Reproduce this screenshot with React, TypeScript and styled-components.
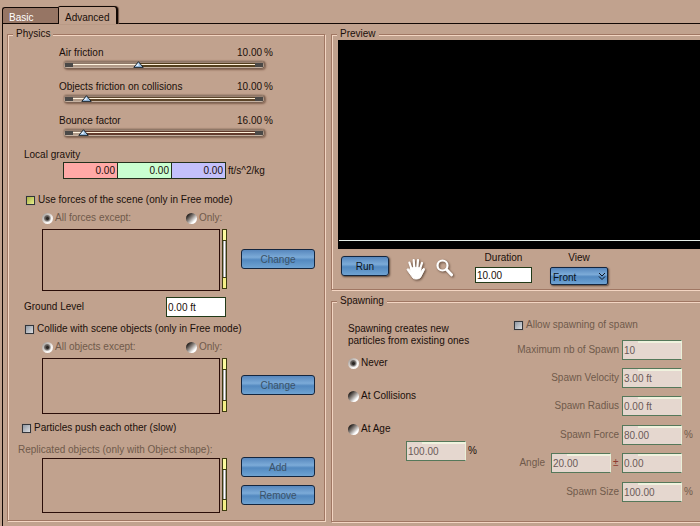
import React, { useState } from "react";
import styled, { createGlobalStyle } from "styled-components";

const bg = "#c1a28e";
const ink = "#1a0f0a";
const dim = "#705a4b";
const edgeDark = "#a07763";
const edgeLight = "#f3d5c2";

const Global = createGlobalStyle`
  * { box-sizing: border-box; }
  body { margin: 0; background: ${bg}; }
  body, input, select, button {
    font-family: "Liberation Sans", Arial, sans-serif;
    font-size: 10px;
    line-height: 12px;
    color: ${ink};
  }
`;

const Page = styled.div`
  display: flex;
  flex-direction: column;
  min-height: 100vh;
  padding: 6px 0 0 2px;
  overflow: hidden;
`;

const TabBar = styled.div`
  display: flex;
  align-items: flex-end;
  height: 17px;
`;

const Tab = styled.button<{ $active?: boolean }>`
  position: relative;
  z-index: ${(p) => (p.$active ? 1 : 0)};
  height: ${(p) => (p.$active ? 18 : 16)}px;
  width: ${(p) => (p.$active ? 60 : 56)}px;
  margin: 0 0 ${(p) => (p.$active ? -1 : 0)}px;
  padding: 4px 0 0 6px;
  text-align: left;
  color: ${(p) => (p.$active ? ink : "#fff")};
  background: ${(p) => (p.$active ? bg : "#967564")};
  border: 1px solid #120804;
  border-width: ${(p) => (p.$active ? "1px 2px 0 1px" : "1px 0 0 1px")};
  border-radius: ${(p) => (p.$active ? "2px 4px 0 0" : "3px 0 0 0")};
  box-shadow: ${(p) => (p.$active ? "1px 0 1px #6d5244" : "none")};
`;

const Panels = styled.main`
  flex: 1;
  display: grid;
  grid-template-columns: 318px minmax(0, 1fr);
  gap: 6px;
  align-items: start;
  padding: 4px 0 4px 4px;
  border: solid #120804;
  border-width: 1px 0 0 1px;
`;

const RightColumn = styled.div`
  display: grid;
  gap: 5px;
`;

const Group = styled.fieldset<{ $open?: boolean }>`
  min-width: 0;
  margin: 0;
  padding: 0;
  border: 1px solid ${edgeDark};
  border-right-width: ${(p) => (p.$open ? 0 : 1)}px;
  box-shadow: 1px 1px 0 ${edgeLight}, inset 1px 1px 0 ${edgeLight};
`;

const Legend = styled.legend`
  margin-left: 5px;
  padding: 0 3px;
  background: ${bg};
`;

const PhysicsBody = styled.div`
  height: 480px;
  padding: 5px 0 0;
`;

const SliderBlock = styled.div`
  width: 214px;
  height: 34px;
  margin-left: 51px;
`;

const SliderHead = styled.div`
  display: flex;
  gap: 2px;
  height: 15px;
  line-height: 16px;
`;

const SliderLabel = styled.label`
  flex: 1;
`;

const SliderTrack = styled.div<{ $tone: string }>`
  position: relative;
  width: 202px;
  height: 9px;
  margin-left: 4px;
  padding: 2px 1px;
  border: 1px solid #a98c79;
  border-bottom-color: #7d6353;
  border-right-color: #7d6353;
  border-radius: 4px;
  box-shadow: 1px 1px 2px #80614f;
  background: linear-gradient(#8b7262, #c9b6a6);

  input {
    display: block;
    appearance: none;
    width: 100%;
    height: 4px;
    margin: 0;
    background: linear-gradient(90deg, #4b4947 8px, transparent 8px calc(100% - 8px), #4b4947 calc(100% - 8px)),
      linear-gradient(${(p) => p.$tone} 1px, #fff0d8 1px 2px, ${(p) => p.$tone} 2px);
  }
  input::-webkit-slider-thumb {
    appearance: none;
    width: 10px;
    height: 6px;
    opacity: 0;
  }
`;

const Fill = styled.span`
  position: absolute;
  top: 2px;
  left: 9px;
  height: 4px;
  background: linear-gradient(#8f7a69 1px, #fff3df 1px 2px, #b19b89 2px);
  pointer-events: none;
`;

const Thumb = styled.svg`
  position: absolute;
  top: 0;
  width: 11px;
  height: 7px;
  margin-left: -5px;
  pointer-events: none;
`;

function Slider({ id, label, value, start, tone }: { id: string; label: string; value: string; start: number; tone: string }) {
  const [pos, setPos] = useState(start);
  return (
    <SliderBlock>
      <SliderHead>
        <SliderLabel htmlFor={id}>{label}</SliderLabel>
        <span>{value}</span>
        <span>%</span>
      </SliderHead>
      <SliderTrack $tone={tone}>
        <input id={id} type="range" min={0} max={200} value={pos} onChange={(e) => setPos(Number(e.target.value))} />
        <Fill style={{ width: `max(0px, calc(${pos / 2}% - 9px))` }} />
        <Thumb viewBox="0 0 11 7" style={{ left: `${pos / 2}%` }}>
          <path d="M5.5 0.7 10.2 6.4H.8Z" fill="#9ec2e6" stroke="#101820" strokeWidth="0.9" />
          <path d="M5.5 1.8 3 5h2.5Z" fill="#edf6ff" />
        </Thumb>
      </SliderTrack>
    </SliderBlock>
  );
}

const Gravity = styled.div`
  height: 45px;
  padding: 0 0 0 16px;
  line-height: 15px;
`;

const GravityRow = styled.div`
  display: flex;
  align-items: center;
  margin-left: 39px;

  span { margin-left: 2px; }
`;

const GravityInput = styled.input<{ $tint: string }>`
  width: 54px;
  height: 17px;
  padding: 0 2px 0 0;
  text-align: right;
  background: ${(p) => p.$tint};
  border: 1px solid #23301c;
  border-right-width: 0;
  border-radius: 0;

  &:last-of-type { width: 55px; border-right-width: 1px; }
`;

const Field = styled.input<{ $w?: number; $h?: number }>`
  width: ${(p) => p.$w ?? 60}px;
  height: ${(p) => p.$h ?? 20}px;
  padding: 0 1px;
  background: #fff;
  border: 1px solid #213a18;
  border-radius: 0;

  &:disabled {
    color: #6b5a58;
    background: linear-gradient(#f0f2de, #f0f2de) right top / 75% 2px no-repeat, #e5d7cf;
    border-color: #55785a #e9efd8 #55785a #55785a;
  }
`;

const Check = styled.label<{ $indent?: number; $dim?: boolean }>`
  display: flex;
  align-items: center;
  gap: 3px;
  height: 16px;
  margin-left: ${(p) => p.$indent ?? 0}px;
  color: ${(p) => (p.$dim ? dim : ink)};
  line-height: 14px;

  input {
    appearance: none;
    width: 9px;
    height: 9px;
    margin: 0;
    border: 1px solid #33353a;
    outline: 1px solid #b89e8d;
    background: linear-gradient(135deg, #9099a4, #dcdde0);
  }
  input:checked {
    background: linear-gradient(135deg, #a9b044, #e6ee8e);
  }
`;

const Radio = styled.label<{ $dim?: boolean }>`
  display: flex;
  align-items: center;
  gap: 2px;
  height: 14px;
  color: ${(p) => (p.$dim ? dim : ink)};

  input {
    appearance: none;
    width: 11px;
    height: 11px;
    margin: 0;
    border-radius: 50%;
    background: linear-gradient(135deg, #2c2724 20%, #8d8681 45%, #fff 75%);
  }
  input:checked {
    background: radial-gradient(circle, transparent 3px, #f5efea88 4px),
      radial-gradient(circle, #2c2724 1px, transparent 4px),
      linear-gradient(135deg, #4c4744 10%, #b8b2ae 45%, #fff 65%);
  }
`;

const RadioRow = styled.div`
  display: grid;
  grid-template-columns: 144px auto;
  height: 21px;
  padding: 3px 0 0 34px;
`;

const ListRow = styled.div<{ $h: number }>`
  display: flex;
  gap: 2px;
  height: ${(p) => p.$h}px;
  margin-left: 34px;
`;

const ListBox = styled.div`
  width: 178px;
  border: 1px solid #2a0d08;
`;

const ScrollBar = styled.div`
  width: 5px;
  margin-bottom: 2px;
  border: 1px solid #3d3b10;
  background: linear-gradient(#fcfba0 10px, #3d3b10 10px 11px, transparent 11px calc(100% - 11px), #3d3b10 calc(100% - 11px) calc(100% - 10px), #f4f088 calc(100% - 10px)),
    linear-gradient(90deg, #777, #fff, #777);
`;

const ButtonStack = styled.div<{ $raised?: boolean }>`
  display: flex;
  flex-direction: column;
  justify-content: ${(p) => (p.$raised ? "flex-start" : "center")};
  gap: 8px;
  margin-top: ${(p) => (p.$raised ? -1 : 0)}px;
  padding-bottom: 2px;
  margin-left: 12px;
`;

const Button = styled.button<{ $run?: boolean }>`
  width: ${(p) => (p.$run ? 48 : 74)}px;
  height: 20px;
  padding: 2px 0 0;
  color: ${(p) => (p.$run ? "#0b1320" : "#3b5268")};
  background: linear-gradient(#5787bd, #7cabd8 40%, #5389c0 55%, #6fa3d2);
  border: 1px solid #14263f;
  border-radius: 3px;
  box-shadow: ${(p) => (p.$run ? "1px 1px 2px #594437" : "none")};
`;

const GroundRow = styled.div`
  display: flex;
  align-items: center;
  justify-content: space-between;
  width: 202px;
  height: 20px;
  margin: 6px 0 4px 16px;
`;

const ListSpacer = styled.div`
  height: 6px;
`;

const Replicated = styled.div`
  height: 22px;
  padding: 8px 0 0 10px;
  color: ${dim};
`;

function FilterGroup({ name, all, height }: { name: string; all: string; height: number }) {
  return (
    <>
      <RadioRow>
        <Radio $dim><input type="radio" name={name} defaultChecked disabled />{all}</Radio>
        <Radio $dim><input type="radio" name={name} disabled />Only:</Radio>
      </RadioRow>
      <ListRow $h={height}>
        <ListBox role="listbox" aria-label={all} />
        <ScrollBar />
        <ButtonStack><Button disabled>Change</Button></ButtonStack>
      </ListRow>
    </>
  );
}

const Viewport = styled.div`
  height: 209px;
  margin-left: 6px;
  padding: 200px 0 0 1px;
  background: #000;
`;

const GroundLine = styled.div`
  height: 1px;
  background: #e6eee8;
`;

const PreviewBar = styled.div`
  display: flex;
  align-items: flex-start;
  height: 40px;
  padding: 3px 0 0 9px;
`;

const RunSlot = styled.div`
  padding-top: 4px;
`;

const ToolButton = styled.button`
  width: 22px;
  height: 24px;
  margin: 5px 0 0 8px;
  padding: 0;
  border: 0;
  background: none;
  filter: drop-shadow(1px 1px 1px #5f483a);

  &:first-of-type { margin-left: 16px; }
  svg { display: block; }
`;

const Captioned = styled.div`
  display: flex;
  flex-direction: column;
  align-items: center;
  gap: 3px;
  margin-left: 18px;
`;

const SelectWrap = styled.div`
  position: relative;

  select {
    display: block;
    appearance: none;
    width: 58px;
    height: 18px;
    padding: 4px 2px 0;
    color: #0b1320;
    background: linear-gradient(#5787bd, #7cabd8 40%, #5389c0 55%, #6fa3d2);
    border: 1px solid #14263f;
    border-radius: 2px;
    box-shadow: 1px 1px 2px #594437;
  }
  svg {
    position: absolute;
    right: 2px;
    top: 5px;
    pointer-events: none;
  }
`;

const SpawnBody = styled.div`
  display: grid;
  grid-template-columns: 160px auto;
  align-items: start;
  justify-content: start;
  height: 214px;
  padding: 10px 0 0 16px;
`;

const SpawnLeft = styled.div`
  padding-top: 6px;
`;

const Modes = styled.div`
  display: grid;
  gap: 19px;
  margin: 9px 0 5px;
`;

const AgeRow = styled.div`
  display: flex;
  align-items: center;
  gap: 2px;
  margin-left: 58px;
`;

const SpawnRight = styled.div`
  width: 186px;
  color: ${dim};
`;

const SpawnGroups = styled.div`
  display: grid;
  gap: 9px;
  margin-top: 7px;
`;

const SpawnGroup = styled.div`
  display: grid;
  gap: 8px;
`;

const SpawnRow = styled.div`
  display: grid;
  grid-template-columns: 1fr 60px 10px;
  align-items: center;
  gap: 2px;
  height: 20px;

  label { justify-self: end; padding-right: 1px; white-space: nowrap; }
`;

const AngleRow = styled.div`
  display: grid;
  grid-template-columns: 1fr 60px 7px 60px 10px;
  align-items: center;
  gap: 2px;

  label { justify-self: end; padding-right: 4px; }
  span { color: #8c3b30; }
`;

function SpawnField({ id, label, value, unit }: { id: string; label: string; value: string; unit?: string }) {
  return (
    <SpawnRow>
      <label htmlFor={id}>{label}</label>
      <Field id={id} defaultValue={value} disabled />
      <span>{unit}</span>
    </SpawnRow>
  );
}

export default function App() {
  return (
    <>
      <Global />
      <Page>
        <TabBar role="tablist">
          <Tab role="tab" aria-selected={false}>Basic</Tab>
          <Tab role="tab" aria-selected $active>Advanced</Tab>
        </TabBar>
        <Panels>
          <Group>
            <Legend>Physics</Legend>
            <PhysicsBody>
              <Slider id="air" label="Air friction" value="10.00" start={74} tone="#54401f" />
              <Slider id="objects" label="Objects friction on collisions" value="10.00" start={22} tone="#5b4429" />
              <Slider id="bounce" label="Bounce factor" value="16.00" start={19} tone="#613a2c" />
              <Gravity>
                <div>Local gravity</div>
                <GravityRow>
                  <GravityInput $tint="#ffa9a6" defaultValue="0.00" aria-label="Gravity X" />
                  <GravityInput $tint="#c9ffd0" defaultValue="0.00" aria-label="Gravity Y" />
                  <GravityInput $tint="#c3c0fb" defaultValue="0.00" aria-label="Gravity Z" />
                  <span>ft/s^2/kg</span>
                </GravityRow>
              </Gravity>
              <Check $indent={18}><input type="checkbox" defaultChecked />Use forces of the scene (only in Free mode)</Check>
              <FilterGroup name="forces" all="All forces except:" height={62} />
              <GroundRow>
                <label htmlFor="ground">Ground Level</label>
                <Field id="ground" defaultValue="0.00 ft" />
              </GroundRow>
              <Check $indent={17}><input type="checkbox" />Collide with scene objects (only in Free mode)</Check>
              <FilterGroup name="collide" all="All objects except:" height={56} />
              <ListSpacer />
              <Check $indent={14}><input type="checkbox" />Particles push each other (slow)</Check>
              <Replicated>Replicated objects (only with Object shape):</Replicated>
              <ListRow $h={55}>
                <ListBox role="listbox" aria-label="Replicated objects" />
                <ScrollBar />
                <ButtonStack $raised>
                  <Button disabled>Add</Button>
                  <Button disabled>Remove</Button>
                </ButtonStack>
              </ListRow>
            </PhysicsBody>
          </Group>
          <RightColumn>
            <Group $open>
              <Legend>Preview</Legend>
              <Viewport><GroundLine /></Viewport>
              <PreviewBar>
                <RunSlot><Button $run>Run</Button></RunSlot>
                <ToolButton aria-label="Pan">
                  <svg width="22" height="23" viewBox="0 0 22 23" fill="none" stroke="#fff" strokeLinecap="round">
                    <path d="M6.5 11 4.4 4.6M9.3 10 8.7 2M12.3 10 13 2.2M15 11 17 5" strokeWidth="2.2" />
                    <path d="M5.2 10.5C8 9 13 9 16 10.2L15.8 14 18 10.8C19.5 9.8 20 11 19.2 12.4L15.5 19.5C13.5 21.5 9.5 21.5 8 20L3 13.2C1.2 11 2.6 10.3 3.8 11.2L6 13.2Z" fill="#fff" strokeWidth="1" />
                  </svg>
                </ToolButton>
                <ToolButton aria-label="Zoom">
                  <svg width="22" height="20" viewBox="0 0 22 20" fill="none" stroke="#fff" strokeLinecap="round">
                    <circle cx="7.5" cy="6.5" r="5" strokeWidth="2.2" />
                    <path d="m11.5 10.5 5 5.3" strokeWidth="3" />
                  </svg>
                </ToolButton>
                <Captioned>
                  <label htmlFor="duration">Duration</label>
                  <Field id="duration" defaultValue="10.00" $w={57} $h={16} />
                </Captioned>
                <Captioned>
                  <label htmlFor="view">View</label>
                  <SelectWrap>
                    <select id="view" defaultValue="Front"><option>Front</option></select>
                    <svg width="8" height="9" viewBox="0 0 8 9" fill="none" stroke="#0b1320">
                      <path d="m1 1 3 3 3-3M1 4.5l3 3 3-3" />
                    </svg>
                  </SelectWrap>
                </Captioned>
              </PreviewBar>
            </Group>
            <Group $open>
              <Legend>Spawning</Legend>
              <SpawnBody>
                <SpawnLeft>
                  <div>Spawning creates new<br />particles from existing ones</div>
                  <Modes>
                    <Radio><input type="radio" name="mode" defaultChecked />Never</Radio>
                    <Radio><input type="radio" name="mode" />At Collisions</Radio>
                    <Radio><input type="radio" name="mode" />At Age</Radio>
                  </Modes>
                  <AgeRow><Field defaultValue="100.00" aria-label="Age" disabled />%</AgeRow>
                </SpawnLeft>
                <SpawnRight>
                  <Check $dim $indent={6}><input type="checkbox" disabled />Allow spawning of spawn</Check>
                  <SpawnGroups>
                    <SpawnGroup>
                      <SpawnField id="max" label="Maximum nb of Spawn" value="10" />
                      <SpawnField id="velocity" label="Spawn Velocity" value="3.00 ft" />
                      <SpawnField id="radius" label="Spawn Radius" value="0.00 ft" />
                    </SpawnGroup>
                    <SpawnGroup>
                      <SpawnField id="force" label="Spawn Force" value="80.00" unit="%" />
                      <AngleRow>
                        <label htmlFor="angle">Angle</label>
                        <Field id="angle" defaultValue="20.00" disabled />
                        <span>±</span>
                        <Field defaultValue="0.00" aria-label="Angle variation" disabled />
                      </AngleRow>
                    </SpawnGroup>
                    <SpawnField id="size" label="Spawn Size" value="100.00" unit="%" />
                  </SpawnGroups>
                </SpawnRight>
              </SpawnBody>
            </Group>
          </RightColumn>
        </Panels>
      </Page>
    </>
  );
}
